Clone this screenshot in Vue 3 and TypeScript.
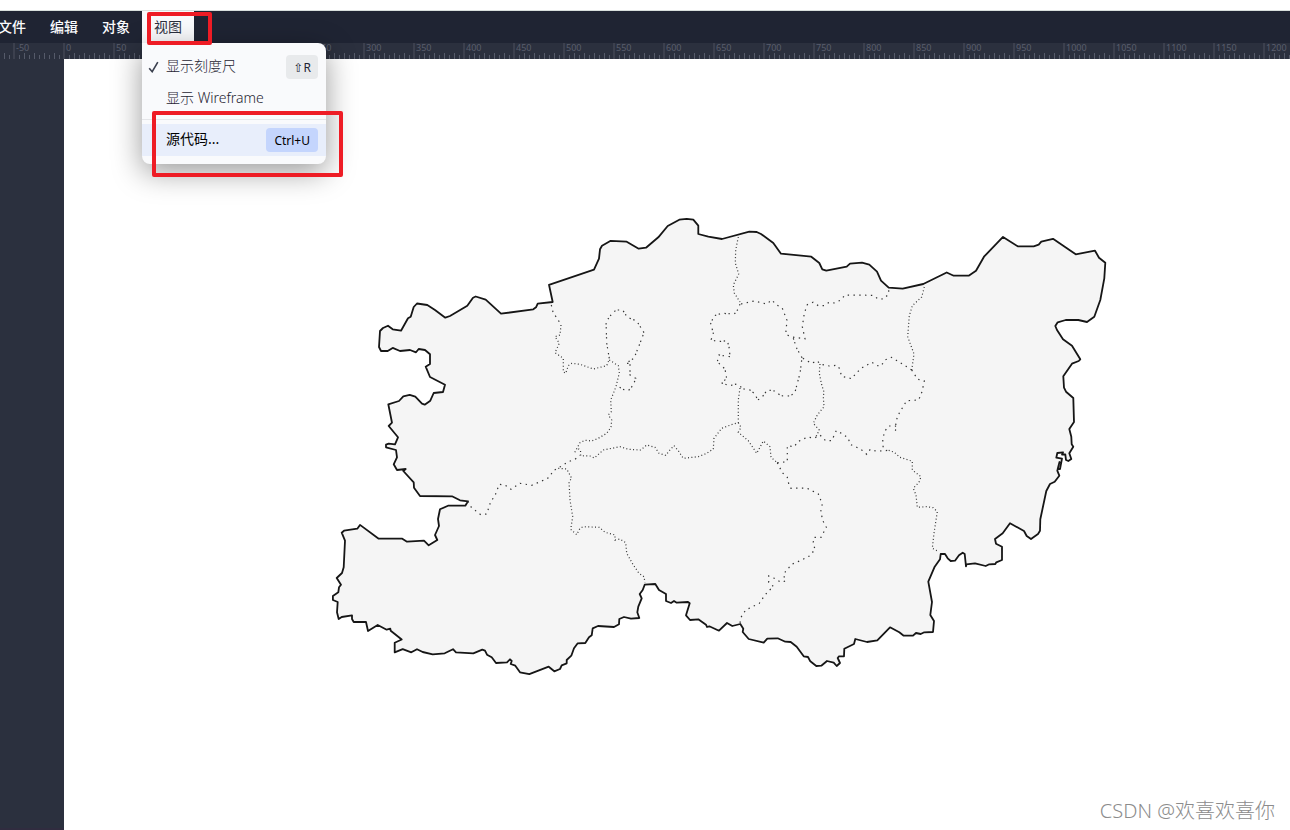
<script setup lang="ts">
interface Menu {
  label: string
  open: boolean
}

interface Command {
  label: string
  shortcut?: string
  checked?: boolean
  active?: boolean
  separated?: boolean
}

const menus: Menu[] = [
  { label: '文件', open: false },
  { label: '编辑', open: false },
  { label: '对象', open: false },
  { label: '视图', open: true },
]

const commands: Command[] = [
  { label: '显示刻度尺', shortcut: '⇧R', checked: true },
  { label: '显示 Wireframe' },
  { label: '源代码...', shortcut: 'Ctrl+U', active: true, separated: true },
]

// One mark per 50 units, enough to reach the right edge of the window.
const markCount = Math.ceil((window.innerWidth + 37) / 50)
const marks: number[] = Array.from({ length: markCount }, (_, i) => (i - 2) * 50)

const outline =
  'M381 351L379 347L380 331L383 328L388 325.7L392.7 329.3L401 330.7L408 318.3L410.7 316.7L413.7 307L417 303.5L427.3 305L435 310L445.3 317.7L450 316L467.3 305.7L473 297.7L475.7 296.5L485.7 299.7L501 313.7L533.3 309.3L536 307.3L537.7 303.7L552.7 302L549 284.8' +
  'L594 269.7L599 258.7L600 249.3L602 245.7L610.7 240.8L626.7 241.7L638.7 248.7L646 247.7L658.3 237.3L667.7 226L679.3 219.7L686.7 218.8L693.3 219.7L698.3 225.7V234L708.3 236.7L722 239L749.3 231.7L756.7 232L761 234L773.3 243L781 253.7' +
  'L811.3 256.7L819.3 263L822.3 269.3L826.3 270.7L846.7 266.7L850 263.7L862 262.7L869.3 264.7L877 271.7L881 280.7L888.7 287.7L902.7 288.7L923.3 284L946.7 272.5L953.7 275.7H968.7L976 270.7' +
  'L984 256.7L1003 236.9L1017.7 246.3H1033.7L1038.7 244.7L1041.3 241.7L1053 238.8L1075.7 254.3L1095 250.7L1099 257.7L1105.3 262.7L1104.3 278.3L1100.3 300L1094.3 316.7L1087 322L1078.3 320H1065.7L1057.7 322.3L1055.3 326L1057 330L1063 339.3L1072 345.7L1080.3 359.3L1078.7 361L1072 363.7L1063.3 376.3L1064 387.7L1066 391.7L1073.3 398L1074 422L1069.3 429L1071.3 436.7L1071.7 444.3L1073.3 446.7L1069.3 453.3L1071.3 459L1068.3 461L1066 460L1065.3 454.3L1062 454.5L1063 452.3L1057.3 453L1056.3 457.7L1062 458.7L1060 469H1057.7L1059.5 462L1057.3 470.7L1059.3 475.7L1054.7 481.7L1050 484L1046.3 491L1040.3 519.3L1040 530.7L1038 534L1031 539L1026.7 536L1024 531L1010 523.2L1002.7 533.3L995 539L996 543.7L1002 546.7V560L996.3 562.3L995.3 564L989.3 564.3L985.7 566L975 563.3L966.3 564.3L966 566.3L964.7 554L962.7 552.7L959 555.3L955 560.7L950.7 561L947.7 558.3L945 554H940.7L940 559.3L934.7 566.7L928.3 581.7' +
  'L932 602L930.3 615L934 621L933 632L924.3 632.3L920.7 634L916 633L913 635.7H903.7L899.3 632.3L890 627.3L877.3 640.3L867 642L855.3 639L854 644L844.3 648.7L844 656.3H839L837.7 658L840 663L836.7 666L833.7 662.7L827 661L821.3 665.7L816.3 666L810.3 661.3L808 657L803.7 656.3L796.7 646.7L790.7 642L785.3 641.7L777.7 638.3L767.3 638.7L763.7 642.7L748.7 639L742.7 632L743.3 628.7L740.3 624' +
  'L732.3 626L727 623L719 630.7L709.3 626.3L707 627L706 624.7L698.3 619.3L690 620L686 615.3L689.7 603.3L688 602L676.7 602.7L674 601L671 603L666 601V594L659 590L655.3 584L644.7 584.7L642.7 590L639.7 594L641.7 598.3L638.3 606.7L637.3 612.3L639.3 618L631 618.7L624 617L619.3 619L619 624.3L614 627L598 626L592.7 628.3L591.7 635.3L589 637.3L585.3 643L577.7 643.3L574 648.3L571.3 655.7L566.7 660V663.3L561.7 665.3L560 669L554.3 671.3' +
  'L548.7 666.7L529.3 674.2L520 672.3L515.3 665.7L510.7 664L511.7 661L510 659.3L507 662.3L496 663L491.7 657.3L487 654.7L485 650.7L482.3 649.7L473.3 653.3L456 652.3L453 649.2L444.7 653.3L432.7 654.3L422.7 652L417 649.2L411.3 652.3L402.7 649.2L394.7 652.3V642.7L401.7 639.5L390.7 630.7L390.3 628.7L386.7 629.7L377.7 625L368 631L366 622H353.7L352 619V615.3L341.7 617L338.7 619L337 612.3L337.7 602L332.9 600V596L338.3 592.3L339 587.3L341 584.7L336.7 578L342 573L343.7 567.3L345 540.7L341.7 532.7L344 530.7L357.3 528.7L360 524.9L378.7 538.7H402.3L407 541.7L424 540.7L428.7 545.3L437.3 540L435 535L439 526L438 519' +
  'L440 509.3L448 505.7H465.3L468 501.3L460 500.3L452 496.3L420 496L414 487.7L413.7 482.3L403.3 471L405.7 469L397 470L393.7 464.3L397 457.3L396 450L386 447.3V444.7L388.7 443.7L395 444.3L398 437.3L388.7 426L392 422.7L388.3 404.3L399 401L403.3 396.3L409.7 394.9L415.3 396.7L422 403.7L424.7 404.7L430.3 400.7L433.7 393L443 392L445 384.7L430 377L425.7 366.7L430 364V354.3L425 350L418.7 349L416 352.3L410 350L400 351L392.7 347.9L387.7 351Z'

// Borders whose dots sit close together.
const fineBorders: string[] = [
  'M738.3 237L735.7 250L735.3 263L738.7 274L733.3 285L734.3 293L740 302',
  'M924.3 287L921.7 297L912.3 305.7L909.3 315.7L907.7 336.7L914 354L911.7 370',
  'M740 388L738.3 400V422.7L733.3 424L721.7 428.3L714 438.3L713.3 449L706.7 453.3L698.3 456.7L683.3 458.3L678.3 450.7L674 445.7L669.3 450.7L665.7 455.3L659 453.3L655 447.3L646.7 445L640.7 450L628.3 449.3L620 446.7L603.3 450L594.3 458L590 456L580.7 455.7L580.5 450.5L576.7 447.3',
  'M609.3 360L618.3 365.7L619.3 372.7L616 386.7L610.7 400L611.3 411.7L608.3 415L611.7 420L611 427.3L606.7 433.3L598.3 438.3L591.7 441L585 440.3L580 442.7L574.3 453.3',
  'M561 325L560 335L555 336.7L559.3 343.3L555 352.7L563.3 358.3V371.7L565.7 373.3L568.3 365.7L571.7 363.3L580 364.3L593.3 369L606.7 365.7L609.3 359.3',
  'M558.3 468.3L566.7 469L571.7 478.3L569 481.7L570 500L572.7 516.7L570.7 529.3L576.7 534.7L580 528.3L583.3 526.7L599.3 527.3L605 532.3L615 535V540L620 539L625.7 542.7L626.7 553.3L633.3 565L639 573.3L644 576.7L645 582.7',
  'M738.3 422.7L741 427.3L738.3 432.3L748.3 440.7L756.7 453.3L763.3 441L770 446.7L771 457.3L777.3 462.7',
  'M820 364L819.3 373.3L821.7 385L824 392L823.3 396.7L824 406.7L817.3 415L813.3 423.3L819.3 430L816 436.7',
  'M888.7 450.3L894.3 452.3L900 457.3L912.3 461.3V470L921 476.7L919 482.3L913.3 488.3L916 495L917.3 507.3L926.7 506.7L933.3 507.7L937.3 511.7L934 533.3L932.3 548.3L939 551.7',
]

// Borders whose dots are spread further apart.
const wideBorders: string[] = [
  'M741 304L754.3 301L766.7 304L771.7 300L776.3 304.7L782.3 308.3L787 320.3L785.7 334.3L791.7 337L805 338.7L802.3 326.7L804.3 313.3L807.3 304.7L813 302.3L818.3 305.7L824 305.7L828.7 302.7L834.7 303L840.7 300L845 295L872.3 295.3L878.7 299.3L884 298.7L888.7 294V288',
  'M911.7 370L917.7 379.3L924.3 381L922 391.7L918.7 400L906.7 400.7L899.3 413L896 421L895.5 431V426L888.7 426L884.7 431.3L882.7 439.3L883.3 450',
  'M911.7 370L906.7 366.7L891.7 357.3L885 360L881 366L877.7 365.7L871.7 362.3L861.7 368L856 373.3L851.7 378.7L841.7 376.3L839.3 368.3L837 365.3L829.3 366L820 364L817.3 360.7L811.7 363.3L805.7 360L802 357.7',
  'M551.3 305L553.3 313.3L557.3 318.3L561 325',
  'M468 501.3L471.3 507.3L480.7 514.7L486.7 514L490.7 501.7L495 495.7L499.3 484.3L505 485L511 489.3L520 483.3L531.7 485.3L544 480L549.3 477.3L553.3 470.7L561.7 466L568.3 461.7L575 459.3L580 455.3',
  'M777.3 462.7L782.3 472.7L787.3 477.3L789 485L791 488.3L806.7 488L818.3 494L822.3 504L820.7 511.7L823 521L826.3 527.3L821 537.3H814L813 544L815.3 549.3L809.3 556L801.7 560L791.7 564.3L783.3 574.3L785.7 581L780.7 582.3L774.3 578.3L768.7 576V582.3L773.7 586.7L768.7 590.7L764.3 596L759.3 603.3L745.7 610L741 617.3L740 623',
  'M777.3 462.7L787.3 461.7V445.7L794.3 446.7L797.7 441.7L807.7 437L814 438.3L820 435L825.7 440.7H831.7L836.3 430.7L842.7 434L848.3 438L850 444.3L855.7 446.7L861.7 450L866.7 454.3L870.3 449.3L876.7 451.3L888.7 450.3',
]

// District rings that are drawn with pairs of short dots.
const ringBorders: string[] = [
  'M793.3 338.3L796.7 348.3L802 357.7L800 373.3L797.3 383.3L794.7 393.3L789.3 396L780.7 395.7L775 391L767.3 390L761.7 397.7L757.7 400L755 394L750 390L744 389L736.7 384L729.3 385.7L721 382.7L726.7 378.7L725 369L717.3 361.7L719 355L730 356.7L729.3 348.3L727.3 340.7L716.7 341.7L711.3 339.3L713.3 333.3L710.7 323.3L714.3 315.7L721.7 313.3L734.3 314L738.3 309L740 304',
  'M609.3 358.3L606.7 343.3L606 321.7L611 315L616 310H622.7L627.3 317.3L636.7 321L644 332.7L639.3 345L634 358.3L625.7 363.3H630V375L635.7 378.3L633.3 385L628.3 390.7L622.7 389.3L617.3 385.7',
]
</script>

<template>
  <div class="editor">
    <header class="menubar">
      <nav class="menus">
        <div v-for="menu in menus" :key="menu.label" class="menu">
          <button type="button" class="menu-button" :class="{ open: menu.open }" :aria-expanded="menu.open">
            {{ menu.label }}
          </button>
          <div v-if="menu.open" class="dropdown">
            <template v-for="command in commands" :key="command.label">
              <hr v-if="command.separated" class="separator" />
              <button type="button" class="command" :class="{ active: command.active }">
                <span class="check">
                  <svg v-if="command.checked" width="12" height="12" viewBox="0 0 12 12" aria-hidden="true">
                    <path d="M1.2 7.2L4.2 10.7L9.8 1.2" fill="none" stroke="#3a3f4e" stroke-width="1.6" />
                  </svg>
                </span>
                <span class="command-label">{{ command.label }}</span>
                <kbd v-if="command.shortcut">{{ command.shortcut }}</kbd>
              </button>
            </template>
          </div>
        </div>
      </nav>
      <span class="frame frame-menu"></span>
      <span class="frame frame-command"></span>
    </header>

    <div class="ruler">
      <div v-for="mark in marks" :key="mark" class="mark">{{ mark }}</div>
    </div>

    <div class="workspace">
      <aside class="sidebar"></aside>
      <main class="canvas">
        <svg class="map" viewBox="64 59 1226 771" role="img" aria-label="map">
          <path class="land" :d="outline" />
          <path v-for="d in fineBorders" :key="d" class="border fine" :d="d" />
          <path v-for="d in wideBorders" :key="d" class="border wide" :d="d" />
          <path v-for="d in ringBorders" :key="d" class="border ring" :d="d" />
        </svg>
        <span class="watermark">CSDN @欢喜欢喜你</span>
      </main>
    </div>
  </div>
</template>

<style>
body {
  margin: 0;
}
</style>

<style scoped>
.editor {
  display: flex;
  flex-direction: column;
  min-height: 100vh;
  overflow: hidden;
  box-sizing: border-box;
  padding-top: 10px;
  background: #fff;
  font-family: "Noto Sans", "Noto Sans CJK SC", sans-serif;
}

.menubar {
  position: relative;
  z-index: 2;
  border-top: 1px solid #d8dfdd;
  background: #1f2433;
}

.menus {
  display: flex;
  margin-left: -14px;
}

.menu {
  position: relative;
}

button {
  border: 0;
  margin: 0;
  background: none;
  font-family: inherit;
  font-size: 14px;
  cursor: pointer;
}

.menu-button {
  display: block;
  height: 32px;
  padding: 0 12px;
  color: #f9fafc;
  font-weight: 500;
  line-height: 32px;
}

.menu-button.open {
  background: #f9fafc;
  color: #2b303e;
  font-weight: 400;
}

.dropdown {
  position: absolute;
  top: 100%;
  left: 0;
  width: 184px;
  box-sizing: border-box;
  padding: 8px 0;
  border-radius: 0 8px 8px 8px;
  background: #f9fafc;
  box-shadow: 0 8px 30px rgba(0, 0, 0, 0.4);
}

.command {
  display: flex;
  align-items: center;
  width: 100%;
  height: 32px;
  padding: 0 8px 0 6px;
  color: #1f2433;
  font-weight: 300;
  text-align: left;
}

.command.active {
  background: #e8eefb;
  color: #000;
}

.check {
  display: flex;
  width: 18px;
}

.command-label {
  flex: 1;
  padding-bottom: 2px;
  line-height: 20px;
  white-space: nowrap;
}

.active .command-label {
  font-weight: 400;
}

kbd {
  box-sizing: border-box;
  height: 24px;
  padding: 0 7px;
  border-radius: 4px;
  background: #e8eaec;
  color: #1f2433;
  font-family: "Noto Sans", "DejaVu Sans", sans-serif;
  font-size: 12px;
  font-weight: 400;
  line-height: 26px;
}

.active kbd {
  padding: 0 8px;
  background: #c4d5fd;
  color: #000;
}

.separator {
  height: 1px;
  margin: 4px 0;
  border: 0;
  background: #e5e6e9;
}

.frame {
  position: absolute;
  box-sizing: border-box;
  border: 4px solid #ee1c25;
  border-radius: 2px;
  pointer-events: none;
}

.frame-menu {
  top: 1px;
  left: 147px;
  width: 65px;
  height: 33px;
}

.frame-command {
  top: 100px;
  left: 152px;
  width: 191px;
  height: 66px;
}

.ruler {
  display: flex;
  height: 16px;
  margin-left: -37px;
  background: #2b303e;
}

.mark {
  flex: none;
  box-sizing: border-box;
  width: 50px;
  height: 16px;
  padding-left: 1px;
  border-left: 2px solid #3c404e;
  background-image:
    linear-gradient(to right, transparent 4px, #555a69 4px, #555a69 5px, transparent 5px),
    linear-gradient(to right, transparent 9px, #555a69 9px);
  background-position: left bottom;
  background-repeat: repeat-x;
  background-size: 10px 4px, 10px 6px;
  color: #5a5e6d;
  font-size: 9px;
  line-height: 10px;
}

.workspace {
  display: flex;
  flex: 1;
}

.sidebar {
  flex: none;
  width: 64px;
  box-sizing: border-box;
  border-bottom: 2px solid #302c3f;
  background: #2b303e;
}

.canvas {
  position: relative;
  flex: 1;
  min-width: 0;
  background: #fff;
}

.map {
  display: block;
  width: 100%;
}

.land {
  fill: #f5f5f5;
  stroke: #161616;
  stroke-width: 1.8;
  stroke-linejoin: round;
}

.border {
  fill: none;
  stroke: #333;
  stroke-width: 1.2;
}

.fine {
  stroke-dasharray: 1 2.4;
}

.wide {
  stroke-dasharray: 1.4 4.4;
}

.ring {
  stroke-dasharray: 1.4 2.6 1.4 4.6;
}

.watermark {
  position: absolute;
  right: 15px;
  bottom: 4px;
  color: #8c8c8c;
  font-size: 20px;
  font-weight: 300;
  line-height: 30px;
}
</style>
